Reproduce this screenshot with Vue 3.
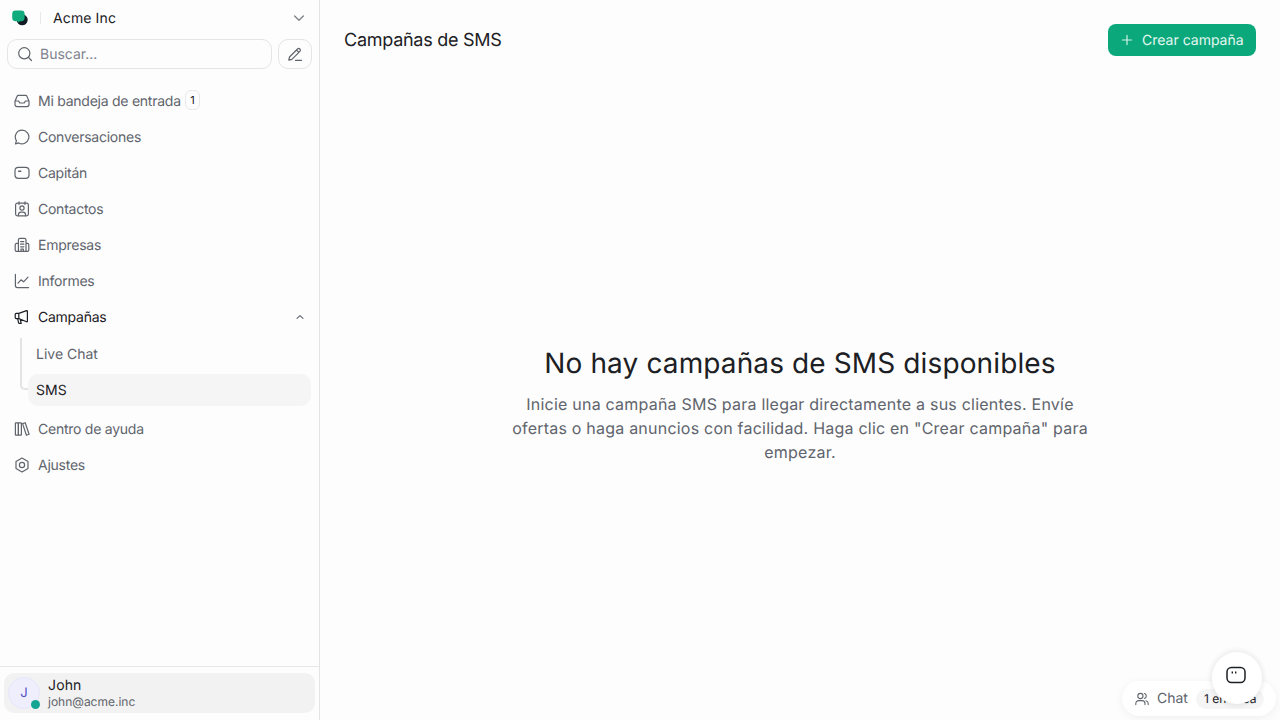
<template>
  <div class="app">
    <aside class="sidebar">
      <div class="account">
        <svg class="logo" width="16" height="16" viewBox="0 0 16 16">
          <circle cx="10.2" cy="9.8" r="5.5" fill="#111c24" />
          <path d="M3.6.4h5.6a3.4 3.4 0 0 1 3.4 3.4v4a3.4 3.4 0 0 1-3.4 3.4H7.8l-1.7 1.6v-1.6H3.6A3.4 3.4 0 0 1 .2 7.8v-4A3.4 3.4 0 0 1 3.6.4z" fill="#12ab7d" />
        </svg>
        <span class="sep"></span>
        <span class="account-name">Acme Inc</span>
        <svg class="chev" width="16" height="16" viewBox="0 0 16 16" fill="none" stroke="#7c8087" stroke-width="1.3" stroke-linecap="round" stroke-linejoin="round"><path d="M3.6 6 8 10.2 12.4 6" /></svg>
      </div>

      <div class="search-row">
        <div class="search">
          <svg width="16" height="16" viewBox="0 0 16 16" fill="none" stroke="#60646c" stroke-width="1.2" stroke-linecap="round"><circle cx="7.3" cy="7.3" r="5.6" /><path d="m11.5 11.5 3 3" /></svg>
          <span>Buscar...</span>
        </div>
        <button class="compose">
          <svg width="16" height="16" viewBox="0 0 16 16" fill="none" stroke="#60646c" stroke-width="1.2" stroke-linecap="round" stroke-linejoin="round"><path d="M1.8 14.2 2.5 11l8-8a1.6 1.6 0 0 1 2.4 2.4l-8 8zM9.5 4l2.4 2.4M8.5 14.4h6" /></svg>
        </button>
      </div>

      <nav class="nav">
        <div class="item">
          <svg class="ico" viewBox="0 0 16 16"><path d="M1 8.2 3 3.4a1.6 1.6 0 0 1 1.5-1h7a1.6 1.6 0 0 1 1.5 1l2 4.8v3.4a2 2 0 0 1-2 2H3a2 2 0 0 1-2-2zM1 8h3.6l1.2 2h4.4l1.2-2H15" /></svg>
          <span>Mi bandeja de entrada</span>
          <span class="count">1</span>
        </div>
        <div class="item">
          <svg class="ico" viewBox="0 0 16 16"><path d="M8 1.2a6.8 6.8 0 1 1-3.3 12.7l-3.2.9.9-3.1A6.8 6.8 0 0 1 8 1.2z" /></svg>
          <span>Conversaciones</span>
        </div>
        <div class="item">
          <svg class="ico" viewBox="0 0 16 16"><rect x="1" y="2.4" width="14" height="11" rx="3.4" /><path d="M4.6 6.2h2.2" stroke-width="1.5" /></svg>
          <span>Capitán</span>
        </div>
        <div class="item">
          <svg class="ico" viewBox="0 0 16 16"><rect x="1.6" y="2.2" width="12.8" height="12.6" rx="1.8" /><path d="M5 .8v2.6M11 .8v2.6" /><circle cx="8" cy="7" r="2.1" /><path d="M4.4 14.6v-1a2.6 2.6 0 0 1 2.6-2.4h2a2.6 2.6 0 0 1 2.6 2.4v1" /></svg>
          <span>Contactos</span>
        </div>
        <div class="item">
          <svg class="ico" viewBox="0 0 16 16"><path d="M4.4 14.4V3a1.6 1.6 0 0 1 1.6-1.6h4.4A1.6 1.6 0 0 1 12 3v11.4zM4.4 6.4H2.6A1.4 1.4 0 0 0 1.2 7.8v5.2a1.4 1.4 0 0 0 1.4 1.4h1.8M12 6.4h1.4a1.4 1.4 0 0 1 1.4 1.4v5.2a1.4 1.4 0 0 1-1.4 1.4H12M6.6 4.6h3.2M6.6 7.2h3.2M6.6 9.8h3.2M7 14.4v-2.2h2.4v2.2" /></svg>
          <span>Empresas</span>
        </div>
        <div class="item">
          <svg class="ico" viewBox="0 0 16 16"><path d="M1.4 1.4v11.2a2 2 0 0 0 2 2h11.2M4 10.2 7 6.8l2.6 2 4.4-4.6" /></svg>
          <span>Informes</span>
        </div>
        <div class="item open">
          <svg class="ico dark" viewBox="0 0 16 16"><path d="M1.2 5.4v3.2a1 1 0 0 0 1 1h2.6l7.8 3.2a.6.6 0 0 0 .8-.6V2.2a.6.6 0 0 0-.8-.6L4.8 4.4H2.2a1 1 0 0 0-1 1zM4.8 4.4v5.2M3.6 9.6l1 4.2a.8.8 0 0 0 .8.6h1.8l-1-4.2" /></svg>
          <span>Campañas</span>
          <svg class="up" width="10" height="10" viewBox="0 0 10 10" fill="none" stroke="#60646c" stroke-width="1.1" stroke-linecap="round" stroke-linejoin="round"><path d="M2 6.4 5 3.6l3 2.8" /></svg>
        </div>
        <div class="sub">
          <div class="tree"></div>
          <div class="sub-item">Live Chat</div>
          <div class="sub-item active">SMS</div>
        </div>
        <div class="item">
          <svg class="ico" viewBox="0 0 16 16"><rect x="1.4" y="1.8" width="3" height="12.4" rx=".5" /><rect x="4.4" y="1.8" width="3" height="12.4" rx=".5" /><path d="m8.6 2.6 2.6-.9 3.9 11.6-2.7.9z" /></svg>
          <span>Centro de ayuda</span>
        </div>
        <div class="item">
          <svg class="ico" viewBox="0 0 16 16"><path d="m8 1 6 3.4v7.2L8 15l-6-3.4V4.4z" /><circle cx="8" cy="8" r="2.6" /></svg>
          <span>Ajustes</span>
        </div>
      </nav>

      <div class="footer">
        <div class="user">
          <div class="avatar">J<i class="dot"></i></div>
          <div class="user-text">
            <div class="user-name">John</div>
            <div class="user-mail">john@acme.inc</div>
          </div>
        </div>
      </div>
    </aside>

    <main class="main">
      <header class="top">
        <h1>Campañas de SMS</h1>
        <button class="create">
          <svg width="14" height="14" viewBox="0 0 14 14" fill="none" stroke="#d4f0e6" stroke-width="1.2" stroke-linecap="round"><path d="M7 2.4v9.2M2.4 7h9.2" /></svg>
          <span>Crear campaña</span>
        </button>
      </header>
      <section class="empty">
        <h2>No hay campañas de SMS disponibles</h2>
        <p>Inicie una campaña SMS para llegar directamente a sus clientes. Envíe ofertas o haga anuncios con facilidad. Haga clic en "Crear campaña" para empezar.</p>
      </section>
    </main>

    <div class="chat-pill">
      <svg width="14" height="14" viewBox="0 0 14 14" fill="none" stroke="#60646c" stroke-width="1.1" stroke-linecap="round" stroke-linejoin="round"><circle cx="5.4" cy="4" r="2.6" /><path d="M.8 12.6v-1a3 3 0 0 1 3-3h3.2a3 3 0 0 1 3 3v1M9.4 1.5a2.6 2.6 0 0 1 0 5M11 8.7a3 3 0 0 1 2.2 2.9v1" /></svg>
      <span class="chat-label">Chat</span>
      <span class="online">1 en línea</span>
    </div>
    <div class="bubble">
      <svg width="20" height="20" viewBox="0 0 20 20" fill="none" stroke="#1c2024" stroke-width="1.5"><rect x="1" y="2.4" width="18" height="15" rx="4.4" /><path d="M6.3 6.4v2M9.7 6.4v2" stroke-width="1.4" /></svg>
    </div>
  </div>
</template>

<script setup>
</script>

<style>
html, body {
  margin: 0;
  background: #fdfdfd;
}
</style>

<style scoped>
.app {
  position: relative;
  display: flex;
  height: 720px;
  overflow: hidden;
  background: #fdfdfd;
  color: #1c2024;
  font-family: Inter, "Liberation Sans", sans-serif;
  font-size: 14px;
  text-rendering: geometricPrecision;
}

.sidebar {
  display: flex;
  flex-direction: column;
  box-sizing: border-box;
  width: 320px;
  flex: none;
  border-right: 1px solid #e4e4e6;
}

.account {
  display: flex;
  align-items: center;
  height: 36px;
  padding: 0 12px;
}

.logo {
  flex: none;
}

.sep {
  width: 1px;
  height: 12px;
  margin: 0 12px;
  background: #e8e8ea;
}

.account-name {
  flex: 1;
  letter-spacing: 0.12px;
}

.search-row {
  display: flex;
  gap: 6px;
  margin-top: 3px;
  padding: 0 7px;
}

.search {
  display: flex;
  align-items: center;
  gap: 7px;
  flex: 1;
  box-sizing: border-box;
  height: 30px;
  padding: 0 9px;
  border: 1px solid #e5e5e7;
  border-radius: 10px;
  color: #80838d;
}

.compose {
  display: flex;
  align-items: center;
  justify-content: center;
  box-sizing: border-box;
  width: 34px;
  height: 30px;
  padding: 0;
  background: none;
  border: 1px solid #e5e5e7;
  border-radius: 10px;
}

.nav {
  flex: 1;
  margin-top: 14px;
}

.item {
  display: flex;
  align-items: center;
  height: 36px;
  padding-left: 14px;
  color: #60646c;
  letter-spacing: -0.25px;
}

.item.open {
  color: #1c2024;
}

.ico {
  flex: none;
  width: 16px;
  height: 16px;
  margin-right: 8px;
  fill: none;
  stroke: #60646c;
  stroke-width: 1.2;
  stroke-linecap: round;
  stroke-linejoin: round;
}

.ico.dark {
  stroke: #1c2024;
}

.count {
  display: flex;
  align-items: center;
  justify-content: center;
  box-sizing: border-box;
  width: 15px;
  height: 20px;
  margin: -2px 0 0 4px;
  border: 1px solid #e8e8ea;
  border-radius: 6px;
  color: #1c2024;
  font-size: 11px;
}

.up {
  margin-left: auto;
  margin-right: 14px;
}

.sub {
  position: relative;
  padding: 3px 8px 5px 28px;
}

.tree {
  position: absolute;
  top: 3px;
  left: 20px;
  width: 8px;
  height: 52px;
  box-sizing: border-box;
  border-left: 2px solid #e4e4e6;
  border-bottom: 2px solid #e4e4e6;
  border-bottom-left-radius: 5px;
}

.sub-item {
  display: flex;
  align-items: center;
  height: 32px;
  margin-bottom: 4px;
  padding-left: 8px;
  border-radius: 10px;
  color: #60646c;
}

.sub-item:last-child {
  margin-bottom: 0;
}

.sub-item.active {
  background: #f5f5f5;
  color: #1c2024;
}

.footer {
  padding: 6px 4px 7px;
  border-top: 1px solid #e8e8ea;
}

.user {
  display: flex;
  align-items: center;
  gap: 8px;
  height: 40px;
  padding-left: 4px;
  border-radius: 10px;
  background: #f2f2f2;
}

.avatar {
  position: relative;
  display: flex;
  align-items: center;
  justify-content: center;
  box-sizing: border-box;
  width: 32px;
  height: 32px;
  border: 1px solid #e6e6fb;
  border-radius: 50%;
  background: #eeeefd;
  color: #5753c6;
  font-size: 13px;
}

.dot {
  position: absolute;
  right: -1px;
  bottom: -1px;
  width: 9px;
  height: 9px;
  border-radius: 50%;
  background: #12a594;
}

.user-name {
  padding-top: 1px;
  font-size: 14px;
  line-height: 16px;
  letter-spacing: 0.15px;
}

.user-mail {
  color: #60646c;
  font-size: 12px;
  line-height: 15px;
}

.main {
  display: flex;
  flex-direction: column;
  flex: 1;
  min-width: 0;
}

.top {
  display: flex;
  align-items: center;
  justify-content: space-between;
  height: 32px;
  padding: 24px 24px 0;
}

.top h1 {
  margin: 0;
  padding-top: 1px;
  font-size: 18px;
  font-weight: 400;
  line-height: 32px;
  letter-spacing: -0.27px;
}

.create {
  display: flex;
  align-items: center;
  gap: 8px;
  box-sizing: border-box;
  width: 148px;
  height: 32px;
  padding: 0 12px;
  border: 0;
  border-radius: 8px;
  background: #0ba87c;
  color: #e6f7f0;
  font: 14px Inter, "Liberation Sans", sans-serif;
  text-rendering: geometricPrecision;
}

.empty {
  display: flex;
  flex-direction: column;
  align-items: center;
  flex: 1;
  padding-top: 289px;
  text-align: center;
}

.empty h2 {
  margin: 0;
  font-size: 28px;
  font-weight: 400;
  line-height: 36px;
  letter-spacing: 0.12px;
}

.empty p {
  width: 580px;
  margin: 11px 0 0;
  color: #60646c;
  font-size: 16px;
  line-height: 24px;
  letter-spacing: 0.22px;
}

.chat-pill {
  position: absolute;
  left: 1122px;
  top: 681px;
  display: flex;
  align-items: center;
  box-sizing: border-box;
  width: 154px;
  height: 35px;
  padding-left: 13px;
  border-radius: 18px;
  background: #fff;
  box-shadow: 0 2px 10px rgba(0, 0, 0, 0.06);
  overflow: hidden;
}

.chat-label {
  margin-left: 8px;
  color: #60646c;
}

.online {
  margin-left: 8px;
  padding: 0 8px;
  height: 20px;
  line-height: 20px;
  border-radius: 10px;
  background: #f5f5f5;
  color: #1c2024;
  font-size: 12px;
  white-space: nowrap;
}

.bubble {
  position: absolute;
  left: 1212px;
  top: 652px;
  display: flex;
  align-items: center;
  justify-content: center;
  box-sizing: border-box;
  width: 50px;
  height: 52px;
  padding: 0 2px 7px 0;
  border-radius: 50%;
  background: #fff;
  box-shadow: 0 0 5px 2px rgba(0, 0, 0, 0.07);
}
</style>
